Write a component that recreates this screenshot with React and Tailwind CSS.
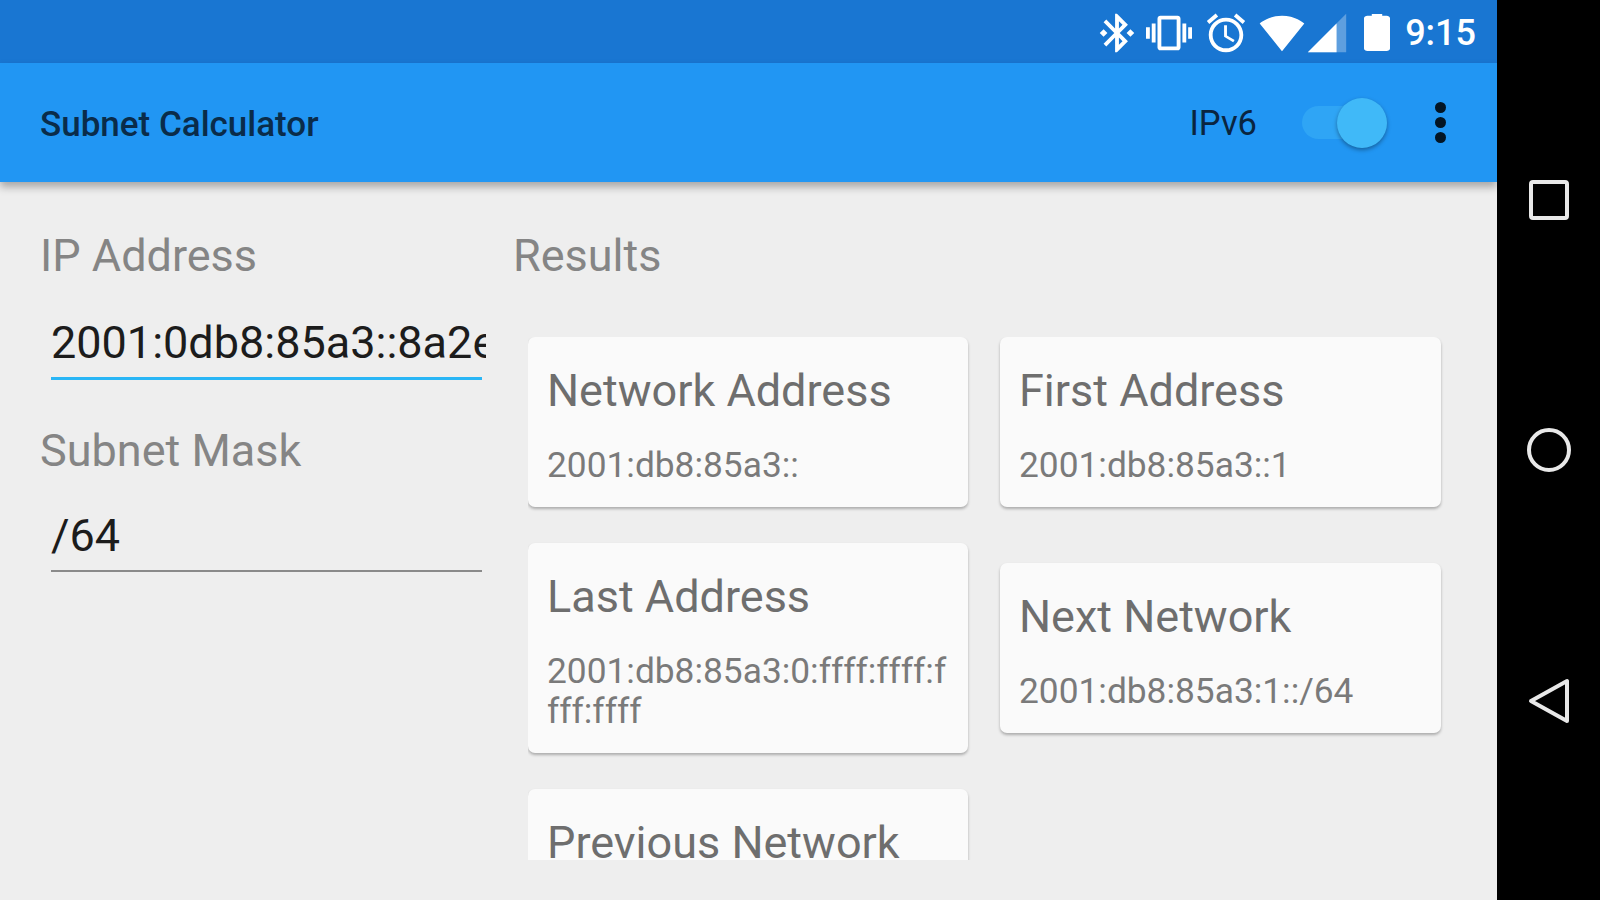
const Icon = ({ d, className = "" }) => (
  <svg viewBox="0 0 24 24" className={`w-[46px] h-[46px] shrink-0 ${className}`} fill="#fff"><path d={d} /></svg>
);

const Card = ({ title, value, className = "" }) => (
  <div className={`bg-[#fafafa] rounded-[7px] px-[19px] pt-[26px] pb-[22px] shadow-[0_2px_3px_rgba(0,0,0,0.28)] ${className}`}>
    <div className="text-[45px] leading-[56px] text-[#6e6e6e]">{title}</div>
    <div className="mt-[26px] text-[35.3px] leading-[40px] text-[#7a7a7a] break-all">{value}</div>
  </div>
);

export default function App() {
  return (
    <div className="w-[1600px] h-[900px] flex overflow-hidden bg-black font-['Roboto',sans-serif]">
      <div className="w-[1497px] h-full flex flex-col bg-[#eeeeee]">
        <div className="h-[63px] shrink-0 bg-[#1976d2] flex items-center justify-end pr-[21px] pt-[2px]">
          <Icon d="M7 12l-2-2-2 2 2 2 2-2zm10.71-4.29L12 2h-1v7.59L6.41 5 5 6.41 10.59 12 5 17.59 6.41 19 11 14.41V22h1l5.71-5.71-4.3-4.29 4.3-4.29zM13 5.83l1.88 1.88L13 9.59V5.83zm1.88 10.46L13 18.17v-3.76l1.88 1.88zM19 10l-2 2 2 2 2-2-2-2z" />
          <Icon className="ml-[6px]" d="M0 15h2V9H0v6zm3 2h2V7H3v10zm19-8v6h2V9h-2zm-3 8h2V7h-2v10zM16.5 3h-9C6.67 3 6 3.67 6 4.5v15c0 .83.67 1.5 1.5 1.5h9c.83 0 1.5-.67 1.5-1.5v-15c0-.83-.67-1.5-1.5-1.5zM16 19H8V5h8v14z" />
          <Icon className="ml-[11px]" d="M22 5.72l-4.6-3.86-1.29 1.53 4.6 3.86L22 5.72zM7.88 3.39L6.6 1.86 2 5.71l1.29 1.53 4.59-3.85zM12.5 8H11v6l4.75 2.85.75-1.23-4-2.37V8zM12 4c-4.97 0-9 4.03-9 9s4.03 9 9 9 9-4.03 9-9-4.03-9-9-9zm0 16c-3.87 0-7-3.13-7-7s3.13-7 7-7 7 3.13 7 7-3.13 7-7 7z" />
          <Icon className="ml-[10px]" d="M12.01 21.49L23.64 7c-.45-.34-4.93-4-11.64-4C5.28 3 .81 6.66.36 7l11.63 14.49.01.01.01-.01z" />
          <svg viewBox="0 0 24 24" className="w-[46px] h-[46px] shrink-0 -ml-px">
            <path fill="#fff" fillOpacity="0.3" d="M2 22h20V2z" />
            <path fill="#fff" d="M17 7L2 22h15z" />
          </svg>
          <svg viewBox="7 2 10 20" preserveAspectRatio="none" className="w-[26px] h-[37px] shrink-0 ml-[14px] mr-[7px]" fill="#fff">
            <path d="M15.67 3H14V2h-4v1H8.33C7.6 3 7 3.6 7 4.33v16.33C7 21.4 7.6 22 8.33 22h7.33c.74 0 1.34-.6 1.34-1.33V4.33C17 3.6 16.4 3 15.67 3z" />
          </svg>
          <span className="ml-[8px] text-[36px] font-medium text-white">9:15</span>
        </div>
        <div className="h-[119px] shrink-0 relative z-10 bg-[#2196f3] flex items-center pl-[40px] pr-[51px] shadow-[0_5px_8px_rgba(0,0,0,0.3)]">
          <span className="text-[35px] font-medium text-[#0a2c4a] pt-[5px]">Subnet Calculator</span>
          <span className="ml-auto text-[34.5px] text-[#0a2540] pt-[3px]">IPv6</span>
          <div className="ml-[45px] relative w-[85px] h-[33px] rounded-full bg-[#2fa5f5]">
            <div className="absolute right-0 top-[-8px] w-[50px] h-[50px] rounded-full bg-[#40b9f8] shadow-[0_2px_4px_rgba(0,0,0,0.35)]" />
          </div>
          <div className="ml-[48px] flex flex-col gap-[4px]">
            <div className="w-[11px] h-[11px] rounded-full bg-[#031525]" />
            <div className="w-[11px] h-[11px] rounded-full bg-[#031525]" />
            <div className="w-[11px] h-[11px] rounded-full bg-[#031525]" />
          </div>
        </div>
        <div className="flex-1 flex min-h-0">
          <div className="w-[513px] shrink-0 pl-[40px] pt-[46px]">
            <div className="text-[45px] leading-[56px] text-[#858585]">IP Address</div>
            <div className="ml-[11px] mt-[31px] w-[435px] overflow-hidden whitespace-nowrap text-[45px] leading-[56px] text-[#1c1c1c]">2001:0db8:85a3::8a2e:0370:7334</div>
            <div className="ml-[11px] mt-[6px] w-[431px] h-[3px] bg-[#29b6f6]" />
            <div className="mt-[43px] text-[45px] leading-[56px] text-[#858585]">Subnet Mask</div>
            <div className="ml-[11px] mt-[29px] text-[45px] leading-[56px] text-[#1c1c1c]">/64</div>
            <div className="ml-[11px] mt-[6px] w-[431px] h-[2px] bg-[#8a8a8a]" />
          </div>
          <div className="flex-1 min-w-0 pt-[46px]">
            <div className="text-[45px] leading-[56px] text-[#858585]">Results</div>
            <div className="mt-[53px] ml-[15px] h-[523px] overflow-hidden flex gap-[32px] pr-[56px]">
              <div className="w-[440px] flex flex-col gap-[36px]">
                <Card title="Network Address" value="2001:db8:85a3::" />
                <Card title="Last Address" value="2001:db8:85a3:0:ffff:ffff:ffff:ffff" />
                <Card title="Previous Network" value="2001:db8:85a2:ffff::/64" />
              </div>
              <div className="w-[441px] flex flex-col gap-[56px]">
                <Card title="First Address" value="2001:db8:85a3::1" />
                <Card title="Next Network" value="2001:db8:85a3:1::/64" />
              </div>
            </div>
          </div>
        </div>
      </div>
      <div className="flex-1 flex flex-col items-center pt-[180px]">
        <svg viewBox="0 0 40 40" className="w-[40px] h-[40px]" fill="none" stroke="#e8e8e8" strokeWidth="4">
          <rect x="2" y="2" width="36" height="36" rx="2" />
        </svg>
        <svg viewBox="0 0 44 44" className="w-[44px] h-[44px] mt-[208px]" fill="none" stroke="#e8e8e8" strokeWidth="4">
          <circle cx="22" cy="22" r="20" />
        </svg>
        <svg viewBox="0 0 42 46" className="w-[42px] h-[46px] mt-[206px]" fill="none" stroke="#e8e8e8" strokeWidth="4" strokeLinejoin="round">
          <path d="M3 23L39 3V43Z" />
        </svg>
      </div>
    </div>
  );
}
